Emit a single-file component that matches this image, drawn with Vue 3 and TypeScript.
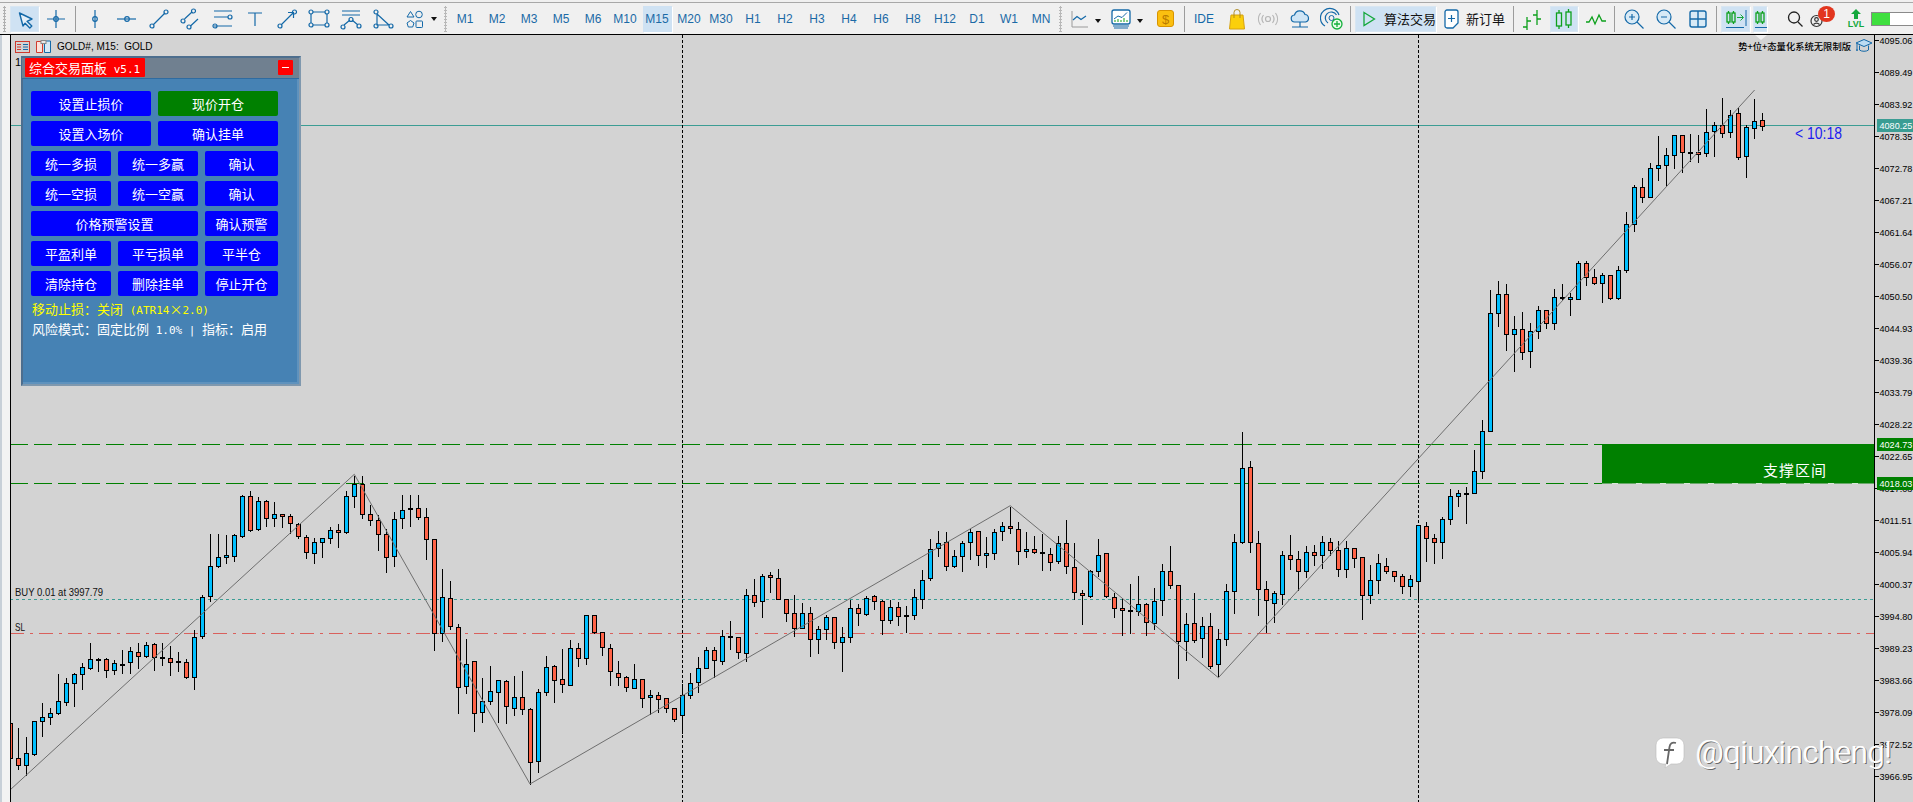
<script setup lang="ts">
type Raw = [number, number, number, number, number]

// Sampled from the reference: [high, bodyTop, bodyBottom, low, bullish]
const partA: Raw[] = [
  [862,955,976,988,0],[888,940,976,1005,1],[843,843,941,945,1],[786,832,844,888,1],[802,820,832,852,1],[700,784,820,822,1],[712,730,785,795,1],[697,703,730,797,1],[667,682,703,747,1],[606,658,683,687,1],
  [650,657,658,692,1],[650,658,691,711,0],[658,670,691,702,1],[628,671,673,700,1],[618,634,667,698,1],[606,637,647,684,0],[604,614,649,651,1],[606,613,652,690,0],[606,652,655,675,1],[614,655,667,704,0],
  [634,664,667,693,1],[655,667,712,714,0],[568,590,712,747,1],[463,470,589,595,1],[279,377,469,483,1],[279,350,377,381,1],[282,344,350,368,1],[279,286,347,362,1],[163,169,287,290,1],[150,169,269,272,0],
  [168,184,268,270,1],[178,184,235,257,0],[183,221,235,257,1],[218,221,229,260,0],[220,229,250,278,0],[246,251,289,295,0],[283,290,337,354,0],[292,305,340,368,1],[294,295,307,351,1],[257,271,295,308,1],
  [250,271,277,320,0],[150,169,277,278,1],[104,131,169,200,1],[105,131,223,234,0],[192,223,241,254,0],[222,241,283,330,0],[263,283,352,395,0],[214,236,349,378,1],[162,209,235,264,1],[162,205,208,258,1],
  [162,205,230,237,0],[201,230,298,357,0],[298,298,580,629,0],[385,470,580,603,1],[420,473,557,567,0],[549,562,742,819,0],[595,671,739,758,1],[660,664,818,873,0],[711,782,815,847,1],[675,754,782,792,1],
  [717,721,755,846,1],[717,724,799,849,0],[705,770,803,825,1],[690,770,808,822,0],[802,808,965,1032,0],[745,755,962,996,1],[645,680,755,765,1],[672,679,719,785,0],[625,718,731,755,0],[598,625,734,735,1],
  [605,625,653,678,0],[524,526,653,671,1],[522,526,575,578,0],[572,575,622,645,0],[610,623,694,735,0],[660,700,710,735,0],[705,710,740,752,0],[668,718,743,745,1],
  [718,718,775,800,0],[748,764,772,822,1],[754,766,776,815,0],[770,775,805,815,0],[800,805,836,842,0],[730,764,826,880,1],[697,728,766,775,1],[649,683,727,755,1],[617,629,683,683,1],[618,631,661,712,0],
  [568,587,664,673,1],[540,589,592,627,1],[588,592,637,654,0],[445,464,640,662,1],[415,464,487,497,0],[400,407,484,530,1],[393,406,412,456,0],[384,413,478,478,0],[476,476,520,543,0],[462,520,565,587,0],
  [486,520,565,565,1],[498,520,598,648,0],[556,568,596,639,1],[522,532,568,597,1],[532,532,607,623,0],[558,592,607,692,1],[477,505,592,605,1],[489,505,520,555,0],[465,473,523,525,1],[461,468,482,507,0],
  [478,484,541,582,0],[478,502,541,548,1],[483,502,529,554,0],[495,525,527,577,1],[445,470,526,536,1],[388,419,476,503,1],[295,326,415,420,1],[270,308,323,347,1],[273,307,379,389,0],[328,347,379,380,1],
  [300,308,347,392,1],[263,275,307,356,1],[271,274,344,374,0],[289,340,344,380,1],[265,275,340,356,1],[244,257,274,300,1],[197,257,265,279,0],[244,266,334,372,0],[273,326,334,350,1],[285,326,337,340,0],
  [278,337,339,390,1],[322,341,367,390,0],[285,308,364,368,1],[238,308,379,398,0],[306,380,457,477,0],[448,458,466,552,0],[388,393,469,470,1],[295,344,394,407,1],[335,340,469,472,0],[455,470,505,530,0],
  [470,503,511,585,0],[430,510,512,580,1],[405,493,514,525,1],[485,493,547,585,0],[442,482,548,566,1],[370,392,481,525,1],[316,394,434,443,0],[433,434,604,714,0],[515,553,604,660,1],[457,550,599,605,0],
  [528,557,595,652,1],[517,559,677,685,0],[565,596,673,707,1],[430,452,596,614,1],[280,305,452,518,1],[-27,85,307,308,1],[60,82,307,335,0],[270,310,446,524,0],[420,446,479,577,0],[450,460,490,545,1]
]
const partB: Raw[] = [
  [240,256,373,402,1],[192,256,268,297,0],[240,268,304,360,0],[225,247,304,320,1],[222,247,256,285,0],[195,217,256,293,1],[200,217,241,255,0],[210,241,298,318,0],[210,235,298,320,1],[232,235,264,290,0],
  [259,262,376,446,0],[282,331,376,398,1],[250,280,331,368,1],[262,289,304,308,0],[300,304,319,332,0],[310,319,349,368,0],[312,328,349,378,1],[163,166,334,395,1],[152,169,205,272,0],[190,205,217,278,0],
  [138,148,217,263,1],[55,79,148,162,1],[58,70,79,107,1],[48,68,70,158,1]
]
const partC: Raw[] = [
  [1047,1112,1178,1180,1],[958,992,1114,1133,1],[568,638,994,994,1],[541,583,638,678,1],[550,583,703,750,0],[645,688,703,812,1],[633,688,757,776,0],[667,694,754,800,1],[615,631,694,714,1],[631,631,670,684,0],
  [565,590,670,686,1],[549,590,594,600,1],[577,592,596,645,1],[481,490,598,598,1],[481,490,532,555,0],[504,532,550,552,0],[517,526,550,606,1],[526,526,595,596,0],[495,509,595,596,1],[333,373,509,515,1],
  [252,262,373,392,1],[232,262,290,306,0],[186,203,290,290,1],[105,196,203,240,1],[141,166,196,258,1],[102,106,166,204,1],[103,106,157,215,0],[99,156,158,183,1],[102,157,163,186,0],[24,95,160,167,1],
  [63,76,94,167,1],[-8,76,100,110,0],[28,44,97,112,1],[21,40,170,176,0],[73,82,169,231,1],[-6,64,83,114,1],[37,61,77,90,0]
]

const px = (v: number, y0: number) => Math.round(y0 + v / 3) + 0.5
const build = (rows: Raw[], y0: number) =>
  rows.map(([h, t, b, l, up]) => {
    const top = px(t, y0)
    return { hi: px(h, y0), lo: px(l, y0), top, height: Math.max(1, px(b, y0) - top), up: !!up }
  })
const candles = [
  { hi: 720, lo: 766, top: 723, height: 35, up: false },
  ...build(partA, 440),
  ...build(partB, 470),
  ...build(partC, 100)
].map((c, i) => ({ ...c, x: 10.5 + 8 * i }))

const axis = Array.from({ length: 24 }, (_, i) => ({
  y: 40 + 32 * i,
  label: (4095.06 - 5.57 * i).toFixed(2)
}))
const tags = [
  { y: 125, label: '4080.25', cls: 'tag-teal' },
  { y: 444, label: '4024.73', cls: 'tag-green' },
  { y: 483, label: '4018.03', cls: 'tag-green' }
]
const zigzag = '10,790 354.3,474.3 530,784 1010.2,505.7 1218.4,677.7 1754.6,90'
const periods = ['M1','M2','M3','M5','M6','M10','M15','M20','M30','H1','H2','H3','H4','H6','H8','H12','D1','W1','MN']
const buttons = [
  { t: '设置止损价', span: 's2' }, { t: '现价开仓', span: 's2', green: true },
  { t: '设置入场价', span: 's2' }, { t: '确认挂单', span: 's2' },
  { t: '统一多损', span: 's1' }, { t: '统一多赢', span: 's2' }, { t: '确认', span: 's1' },
  { t: '统一空损', span: 's1' }, { t: '统一空赢', span: 's2' }, { t: '确认', span: 's1' },
  { t: '价格预警设置', span: 's3' }, { t: '确认预警', span: 's1' },
  { t: '平盈利单', span: 's1' }, { t: '平亏损单', span: 's2' }, { t: '平半仓', span: 's1' },
  { t: '清除持仓', span: 's1' }, { t: '删除挂单', span: 's2' }, { t: '停止开仓', span: 's1' }
]
</script>

<template>
  <div class="app">
    <header class="toolbar">
      <span class="grip g10"></span>
      <span class="tool sel w29">
        <svg width="24" height="24" viewBox="0 0 24 24"><path d="M6.5 6 19 12l-5 2.3 4.800 4.700-2 2-4.700-4.800L10 19Z" fill="#e6f0f8" stroke="#1469a8" stroke-width="1.400" stroke-linejoin="round"/></svg>
      </span>
      <span class="tool w34">
        <svg class="ic" width="24" height="24" viewBox="0 0 24 24"><path d="M3 12h18M12 3v18"/><circle cx="12" cy="12" r="2.300"/></svg>
      </span>
      <span class="sep sep-a"></span>
      <span class="tool w32"><svg class="ic" width="24" height="24" viewBox="0 0 24 24"><path d="M12 3v18"/><circle cx="12" cy="12" r="2.300"/></svg></span>
      <span class="tool w32"><svg class="ic" width="24" height="24" viewBox="0 0 24 24"><path d="M2 12h19"/><circle cx="12" cy="12" r="2.300"/></svg></span>
      <span class="tool w32"><svg class="ic" width="24" height="24" viewBox="0 0 24 24"><path d="M6 18 18 6"/><circle cx="5" cy="19" r="2"/><circle cx="19" cy="5" r="2"/></svg></span>
      <span class="tool w32"><svg class="ic" width="24" height="24" viewBox="0 0 24 24"><path d="M5.500 12 13 5M11.500 19 19 12"/><circle cx="4" cy="14" r="2"/><circle cx="14.500" cy="4" r="2"/><circle cx="10" cy="20" r="2"/></svg></span>
      <span class="tool w32"><svg class="ic" width="24" height="24" viewBox="0 0 24 24"><path d="M3 4h18M3 10h14M3 19h18"/><circle cx="19" cy="10" r="2"/><circle cx="4" cy="19" r="2"/></svg></span>
      <span class="tool w32"><svg class="ic" width="24" height="24" viewBox="0 0 24 24"><path d="M5 6h14M12 6v13"/></svg></span>
      <span class="tool w32"><svg class="ic" width="24" height="24" viewBox="0 0 24 24"><path d="M6 18 18 6M13 5.500h5.500V11"/><circle cx="5" cy="19" r="2"/><circle cx="19.500" cy="5" r="2"/></svg></span>
      <span class="tool w32"><svg class="ic" width="24" height="24" viewBox="0 0 24 24"><path d="M6 5h12M6 18h12M4 7v9M20 7v9"/><circle cx="4" cy="5" r="2"/><circle cx="20" cy="5" r="2"/><circle cx="4" cy="18" r="2"/><circle cx="20" cy="18" r="2"/></svg></span>
      <span class="tool w32"><svg class="ic" width="24" height="24" viewBox="0 0 24 24"><path d="M3 4h18M3 8h18M5 18l6-5M13 13l6 5"/><circle cx="4" cy="20" r="2"/><circle cx="12" cy="12.500" r="2"/><circle cx="20" cy="19" r="2"/></svg></span>
      <span class="tool w32"><svg class="ic" width="24" height="24" viewBox="0 0 24 24"><path d="M6 7 18 18M6 7v11h12"/><circle cx="5" cy="5" r="2"/><circle cx="5" cy="19" r="2"/><circle cx="20" cy="19" r="2"/></svg></span>
      <span class="tool w32"><svg class="ic thin" width="24" height="24" viewBox="0 0 24 24"><path d="M7.500 4.500 11 10H4Z"/><circle cx="16" cy="7.500" r="3.300"/><path d="M7.500 13.500 11 16l-1.300 4H5.300L4 16Z"/><rect x="13" y="14" width="6.500" height="6.500" rx=".8"/></svg></span>
      <span class="drop w10"></span>
      <span class="grip g8"></span>
      <span v-for="p in periods" :key="p" class="period"><span class="pl" :class="{ on: p === 'M15' }">{{ p }}</span></span>
      <span class="grip g6"></span>
      <span class="tool w42 lc">
        <svg width="24" height="24" viewBox="0 0 24 24" fill="none"><path d="M5 4v16h16" stroke="#9a9a9a"/><path d="M6 13l4-3.500 4 3 5-3.500" stroke="#1469a8" stroke-width="1.200"/></svg>
        <i class="tri"></i>
      </span>
      <span class="tool w42 lc">
        <svg width="24" height="24" viewBox="0 0 24 24" fill="none"><rect x="3" y="3" width="18" height="14" rx="2" fill="#fff" stroke="#1469a8" stroke-width="1.300"/><path d="M5 12l4-3 4 1.500 5-5" stroke="#1469a8"/><path d="M6 15v-2M9 15v-3M12 15v-2M15 15v-4M18 15v-2" stroke="#12a012"/><path d="M4 19h16M5 21h14" stroke="#1469a8"/></svg>
        <i class="tri"></i>
      </span>
      <span class="tool w37">
        <svg width="24" height="24" viewBox="0 0 24 24"><rect x="3.500" y="3.500" width="16" height="16" rx="2.500" fill="#fbbf10" stroke="#d89400"/><text x="11.500" y="16.500" class="dollar">$</text></svg>
      </span>
      <span class="sep"></span>
      <span class="tool w38 ide">IDE</span>
      <span class="tool w28">
        <svg width="24" height="24" viewBox="0 0 24 24" fill="none"><path d="M6 8h12l1.500 14h-15Z" fill="#fbcf0c" stroke="#d6a210"/><path d="M9 11V5.500a3 3 0 0 1 6 0V11" stroke="#a88418" stroke-width=".9"/></svg>
      </span>
      <span class="tool w34">
        <svg width="24" height="24" viewBox="0 0 24 24" fill="none" stroke="#b5b5b5" stroke-width="1.200"><circle cx="12" cy="12" r="2.500"/><path d="M7.500 8a6.500 6.500 0 0 0 0 8M16.500 8a6.500 6.500 0 0 1 0 8M4.500 6a10 10 0 0 0 0 12M19.500 6a10 10 0 0 1 0 12"/></svg>
      </span>
      <span class="tool w30">
        <svg class="ic" width="24" height="24" viewBox="0 0 24 24"><path d="M7 15a3.500 3.500 0 0 1-.5-7A5.500 5.500 0 0 1 17 7.500 3.800 3.800 0 0 1 17.500 15Z" fill="#cfe5f5"/><path d="M12 15v5M4 20h16"/></svg>
      </span>
      <span class="tool w34">
        <svg width="24" height="24" viewBox="0 0 24 24" fill="none"><path d="M5 19a9.500 9.500 0 1 1 14-11" stroke="#1469a8" stroke-width="1.200"/><path d="M8 16a6 6 0 1 1 8.500-8" stroke="#1469a8" stroke-width="1.200"/><circle cx="11.500" cy="11" r="2.500" stroke="#1469a8"/><circle cx="17" cy="17" r="5" fill="#eafbea" stroke="#14b03c" stroke-width="1.300"/><path d="M17 14v6M14 17h6" stroke="#14b03c" stroke-width="1.300"/></svg>
      </span>
      <span class="sep sep-b"></span>
      <span class="tool sel w81 algo">
        <svg width="16" height="18" viewBox="0 0 16 18" fill="none"><path d="M3 2.500 13.500 9 3 15.500Z" stroke="#14a83c" stroke-width="1.300"/></svg>
        <span class="cn">算法交易</span>
      </span>
      <span class="tool w77 order">
        <svg width="18" height="22" viewBox="0 0 18 22" fill="none"><path d="M4 2h9a2 2 0 0 1 2 2v11l-5 5H4a2 2 0 0 1-2-2V4a2 2 0 0 1 2-2Z" fill="#fff" stroke="#1469a8" stroke-width="1.300"/><path d="M8.500 7v7M5 10.500h7" stroke="#1469a8" stroke-width="1.200"/></svg>
        <span class="cn">新订单</span>
      </span>
      <span class="sep"></span>
      <span class="tool w36">
        <svg class="gr" width="24" height="24" viewBox="0 0 24 24"><path d="M7 10v13M3 20h4M7 14h4M17 3v15M13 8h4M17 12h4"/></svg>
      </span>
      <span class="tool sel w28">
        <svg class="gr" width="24" height="24" viewBox="0 0 24 24"><path d="M7 3v3M7 19v3M16.500 2v3M16.500 18v3"/><rect x="4.500" y="6" width="5" height="13" fill="#d2e4f4"/><rect x="14" y="5" width="5" height="13" fill="#d2e4f4"/></svg>
      </span>
      <span class="tool w36">
        <svg class="gr" width="24" height="24" viewBox="0 0 24 24"><path d="M2 15h3l3-5 3 7 4-9 3 6h4"/></svg>
      </span>
      <span class="sep"></span>
      <span class="tool w35 nudge">
        <svg class="ic" width="24" height="24" viewBox="0 0 24 24"><circle cx="10" cy="10" r="7" fill="#d8eaf6"/><path d="m15 15 6.500 6.500M7 10h6M10 7v6"/></svg>
      </span>
      <span class="tool w32">
        <svg class="ic" width="24" height="24" viewBox="0 0 24 24"><circle cx="10" cy="10" r="7" fill="#d8eaf6"/><path d="m15 15 6.500 6.500M7 10h6"/></svg>
      </span>
      <span class="tool w32">
        <svg class="ic" width="24" height="24" viewBox="0 0 24 24"><rect x="4" y="4" width="16" height="16" rx="2" fill="#d8eaf6" stroke-width="1.400"/><path d="M12 4v16M4 12h16" stroke-width="1.400"/></svg>
      </span>
      <span class="sep sep-c"></span>
      <span class="tool sel w29">
        <svg width="24" height="24" viewBox="0 0 24 24" fill="none"><g class="gr"><path d="M4.500 4v2M4.500 15v2M9.500 4v2M9.500 15v2"/><rect x="3" y="6" width="3" height="9"/><rect x="8" y="6" width="3" height="9"/></g><path d="M13 10.500h6M16.500 7.500l3 3-3 3" stroke="#14a83c"/><path d="M22 3v16M2 20.500h18" stroke="#1469a8"/></svg>
      </span>
      <span class="tool sel w14 clip">
        <svg width="14" height="24" viewBox="0 0 14 24" fill="none"><g class="gr"><path d="M4.500 4v2M4.500 15v2M9.500 4v2M9.500 15v2"/><rect x="3" y="6" width="3" height="9"/><rect x="8" y="6" width="3" height="9"/></g><path d="M2 20.500h12" stroke="#1469a8"/></svg>
      </span>
      <span class="tool w28 search">
        <svg width="24" height="24" viewBox="0 0 24 24" fill="none" stroke="#222" stroke-width="1.300"><circle cx="11" cy="10.500" r="5.500"/><path d="m15 15 4.500 4.500"/></svg>
      </span>
      <span class="tool w28 mail">
        <svg width="24" height="24" viewBox="0 0 24 24" fill="none" stroke="#333" stroke-width="1.200"><circle cx="7.500" cy="14" r="5.500"/><path d="M4.500 17.500a4 4 0 0 1 6 0"/><circle cx="7.500" cy="12.500" r="1.800"/></svg>
        <span class="badge">1</span>
      </span>
      <span class="tool w28 lvl">
        <svg width="14" height="10" viewBox="0 0 14 10" fill="#14a83c"><path d="M7 0 12 5H9v5H5V5H2Z"/></svg>
        <span>LVL</span>
      </span>
      <span class="progress"><i></i></span>
    </header>

    <main class="work">
      <aside class="strip"></aside>
      <section class="chart">
        <svg class="canvas" width="1903" height="767" viewBox="10 35 1903 767">
          <rect x="1602" y="444" width="272" height="39.500" fill="#008000"/>
          <path d="M1612 483.500h1652" class="zone-dash"/>
          <path d="M10 444.500H1874" class="dash-g"/>
          <path d="M10 483.500H1602" class="dash-g"/>
          <path d="M10 125.500H1874" class="line-teal"/>
          <path d="M10 599.500H1874" class="line-buy"/>
          <path d="M10 633.500H1874" class="line-sl"/>
          <path d="M682.500 35V802M1418.500 35V802" class="cross"/>
          <g v-for="c in candles" :key="c.x">
            <path :d="`M${c.x} ${c.hi}V${c.lo}`" class="wick"/>
            <rect :x="c.x - 2" :y="c.top" width="4" :height="c.height" :class="c.up ? 'bull' : 'bear'"/>
          </g>
          <polyline :points="zigzag" class="zig"/>
          <text x="1763" y="476" class="zone-text">支撑区间</text>
          <text x="15" y="596" class="lbl" textLength="88" lengthAdjust="spacingAndGlyphs">BUY 0.01 at 3997.79</text>
          <text x="15" y="631" class="lbl" textLength="10" lengthAdjust="spacingAndGlyphs">SL</text>
          <text x="1795" y="139" class="count" textLength="47" lengthAdjust="spacingAndGlyphs">&lt; 10:18</text>
          <path d="M1755 35h12l-6 5Z" fill="#f0f0f0"/>
          <path d="M10.500 35V802" class="ax"/>
          <path d="M1874.500 35V802" class="ax"/>
          <g v-for="a in axis" :key="a.label">
            <path :d="`M1875 ${a.y + 0.5}h4`" class="ax"/>
            <text x="1879.500" :y="a.y + 4" class="tick">{{ a.label }}</text>
          </g>
          <g v-for="t in tags" :key="t.label">
            <rect x="1877" :y="t.y - 6" width="36" height="13" :class="t.cls"/>
            <text x="1879.500" :y="t.y + 4" class="tag-text">{{ t.label }}</text>
          </g>
        </svg>

        <div class="chart-head">
          <svg width="15" height="12" viewBox="0 0 15 12" fill="none"><rect x=".5" y=".5" width="14" height="11" stroke="#d03a2e"/><path d="M2 3.500h4M2 6h4M2 8.500h4" stroke="#d03a2e"/><path d="M8 3.500h5M8 6h5M8 8.500h5" stroke="#1469a8"/></svg>
          <svg class="disk" width="15" height="13" viewBox="0 0 15 13" fill="none"><path d="M.5 1.500h6v11h-6Z" fill="#fbe3dc" stroke="#d03a2e"/><path d="M8.500 1h6v11.500h-6Z" fill="#d8eaf6" stroke="#1469a8"/><rect x="5" y=".5" width="5" height="3" fill="#e8e8e8" stroke="#888"/></svg>
          <span>GOLD#, M15:&nbsp; GOLD</span>
        </div>
        <span class="stray">10</span>
        <div class="promo">
          <span>势+位+态量化系统无限制版</span>
          <svg width="18" height="16" viewBox="0 0 18 16" fill="none"><path d="M1 5l8-3.500L17 5 9 8.500Z" fill="#bcdcf2" stroke="#1469a8"/><path d="M4.500 7.500V12c2 1.700 7 1.700 9 0V7.500M2 5.500V11" stroke="#1469a8"/><circle cx="2" cy="12" r="1" fill="#1469a8"/></svg>
        </div>

        <div class="panel">
          <div class="title">
            <span class="title-label">综合交易面板<span class="lat"> v5.1</span></span>
            <span class="min"><i></i></span>
          </div>
          <div class="panel-body">
            <div class="grid">
              <button v-for="(b, i) in buttons" :key="i" type="button" class="btn" :class="[b.span, { green: b.green }]">{{ b.t }}</button>
            </div>
            <p class="status yellow">移动止损：关闭<span class="lat"> (ATR14</span>×<span class="lat">2.0)</span></p>
            <p class="status white">风险模式：固定比例<span class="lat"> 1.0% | </span>指标：启用</p>
          </div>
        </div>

        <div class="mark">
          <svg width="30" height="32" viewBox="0 0 30 32">
            <path d="M8 1h14a7 7 0 0 1 7 7v12a7 7 0 0 1-7 7h-6l-6 4 1-4H8a7 7 0 0 1-7-7V8a7 7 0 0 1 7-7Z" fill="#fff" stroke="#bbb" stroke-width=".6"/>
            <path d="M21 6c-4-1-6 .5-6.500 4l-2.500 17M9 13h10" fill="none" stroke="#666" stroke-width="1.800"/>
          </svg>
          <span>@qiuxincheng!</span>
        </div>
      </section>
    </main>
  </div>
</template>

<style>
html, body { margin: 0; background: #f0f0f0; overflow: hidden; }
</style>

<style scoped>
.app {
  width: 1913px;
  height: 802px;
  display: flex;
  flex-direction: column;
  overflow: hidden;
  background: #f0f0f0;
  font-family: "Liberation Sans", "Noto Sans CJK SC", sans-serif;
}
.toolbar {
  box-sizing: border-box;
  border-top: 1px solid #a8a8a8;
  border-bottom: 1px solid #000;
  margin-top: 2px;
  height: 33px;
  display: flex;
  align-items: center;
  flex: none;
  overflow: hidden;
}
.grip { flex: none; height: 26px; box-sizing: border-box; }
.g10 { width: 10px; padding-left: 3px; background: radial-gradient(circle, #b0b0b0 1px, transparent 1.2px) 3px 0 / 3px 3px repeat-y; }
.g8 { width: 8px; background: radial-gradient(circle, #b8b8b8 1px, transparent 1.2px) 3px 0 / 3px 3px repeat-y; }
.g6 { width: 6px; background: radial-gradient(circle, #b8b8b8 1px, transparent 1.2px) 2px 0 / 3px 3px repeat-y; }
.tool {
  flex: none;
  height: 26px;
  display: flex;
  align-items: center;
  justify-content: center;
  position: relative;
  box-sizing: border-box;
}
.sel { background: #cfe2f3; box-shadow: inset 0 0 0 1px #d8e6f2, 1px 1px 0 #fff; }
.w10 { width: 10px; } .w14 { width: 14px; } .w28 { width: 28px; } .w29 { width: 29px; } .w30 { width: 30px; }
.w32 { width: 32px; } .w34 { width: 34px; } .w35 { width: 35px; } .w36 { width: 36px; } .w37 { width: 37px; }
.w38 { width: 38px; } .w42 { width: 42px; } .w77 { width: 77px; } .w81 { width: 81px; }
.ic { fill: none; stroke: #1469a8; stroke-width: 1.200; }
.ic.thin { stroke-width: 1; }
.gr { fill: none; stroke: #0da01c; stroke-width: 1.300; }
.sep { flex: none; width: 1px; height: 26px; background: #9c9c9c; }
.sep-a { margin: 0 3px 0 2px; }
.sep-b { margin: 0 4px 0 1px; }
.sep-c { margin: 0 4px 0 2px; }
.drop { flex: none; position: relative; height: 10px; }
.drop::after, .tri {
  content: "";
  position: absolute;
  width: 0;
  height: 0;
  border-left: 3.500px solid transparent;
  border-right: 3.500px solid transparent;
  border-top: 4px solid #111;
}
.drop::after { left: 0; top: 3px; }
.tri { position: static; margin-left: 4px; margin-top: 5px; }
.lc { justify-content: flex-start; padding-left: 4px; }
.period { flex: none; width: 32px; height: 26px; display: flex; justify-content: center; }
.pl {
  width: 29px;
  line-height: 26px;
  text-align: center;
  font-size: 12px;
  color: #1b6aa6;
}
.pl.on { background: #cfe2f3; box-shadow: 1px 1px 0 #fff; }
.dollar { font: 13px "Liberation Sans", sans-serif; fill: #b87a00; text-anchor: middle; }
.ide { font-size: 12px; color: #1469a8; }
.cn { font: 13px "Noto Sans CJK SC", sans-serif; color: #111; white-space: nowrap; }
.algo { gap: 7px; justify-content: flex-start; padding-left: 6px; }
.order { gap: 5px; justify-content: flex-start; padding-left: 7px; }
.nudge svg { margin-left: 2px; }
.clip { overflow: hidden; margin-left: 3px; }
.search { margin-left: 14px; }
.mail { justify-content: flex-start; padding-left: 0; }
.badge {
  position: absolute;
  left: 9px;
  top: 0;
  width: 17px;
  height: 16px;
  border-radius: 50%;
  background: #e2361f;
  color: #fff;
  font-size: 12px;
  line-height: 16px;
  text-align: center;
}
.lvl {
  flex-direction: column;
  margin-left: 5px;
  color: #14a83c;
  font-size: 9px;
  font-weight: 700;
  line-height: 10px;
}
.progress {
  flex: none;
  margin-left: 1px;
  width: 42px;
  height: 14px;
  box-sizing: border-box;
  background: #fff;
  border: 1px solid #8a8a8a;
  border-right: none;
}
.progress i { display: block; width: 18px; height: 100%; background: #3fdf3f; }
.work { flex: 1; display: flex; min-height: 0; }
.strip { flex: none; width: 10px; background: linear-gradient(90deg, #c8d0d8 0 2px, #f3f3f3 2px); }
.chart {
  flex: 1;
  position: relative;
  background: #d3d3d3;
  overflow: hidden;
}
.canvas { display: block; }
.canvas text { font-family: "Liberation Sans", sans-serif; }
.cross { stroke: #000; stroke-width: 1; stroke-dasharray: 3 2; shape-rendering: crispEdges; }
.wick { stroke: #000; stroke-width: 1; fill: none; shape-rendering: crispEdges; }
.bull, .bear { stroke: #000; stroke-width: 1; shape-rendering: crispEdges; }
.bull { fill: #00bfff; }
.bear { fill: #ff6347; }
.zig { fill: none; stroke: #6e6e6e; stroke-width: 1; }
.dash-g { stroke: #008000; stroke-width: 1; stroke-dasharray: 18 6; shape-rendering: crispEdges; }
.zone-dash { stroke: #d8e8d8; stroke-width: 1; stroke-dasharray: 6 18; shape-rendering: crispEdges; }
.line-teal { stroke: #3b9d94; stroke-width: 1; shape-rendering: crispEdges; }
.line-buy { stroke: #3b9d94; stroke-width: 1; stroke-dasharray: 3 3; shape-rendering: crispEdges; }
.line-sl { stroke: #d9605c; stroke-width: 1; stroke-dasharray: 14 6 3 6; shape-rendering: crispEdges; }
.ax { stroke: #000; stroke-width: 1; fill: none; shape-rendering: crispEdges; }
.tick { font-size: 9.100px; fill: #000; }
.lbl { font-size: 11px; fill: #111; }
.count { font-size: 16px; fill: #1c1cf0; }
.canvas .zone-text { font: 15px "Noto Sans CJK SC", sans-serif; fill: #fff; letter-spacing: 1px; }
.tag-teal { fill: #3b9d94; }
.tag-green { fill: #008000; }
.tag-text { font-size: 9.100px; fill: #fff; }
.chart-head {
  position: absolute;
  left: 5px;
  top: 5px;
  display: flex;
  align-items: center;
  gap: 6px;
  font-size: 10px;
  color: #000;
  white-space: nowrap;
}
.disk { margin-right: 0; }
.stray { position: absolute; left: 5px; top: 21px; font-size: 11px; color: #000; }
.promo {
  position: absolute;
  right: 40px;
  top: 3px;
  display: flex;
  align-items: center;
  gap: 4px;
  font: 500 9.300px "Noto Sans CJK SC", sans-serif;
  color: #000;
  white-space: nowrap;
}
.panel {
  position: absolute;
  left: 11px;
  top: 21px;
  width: 280px;
  height: 330px;
  box-sizing: border-box;
  display: flex;
  flex-direction: column;
  border: 2px solid #7f98ae;
  border-top-color: #4d6e8e;
  border-left-color: #4d6e8e;
  background: #4682b4;
  font-family: "Noto Sans CJK SC", sans-serif;
  color: #fff;
}
.title {
  flex: none;
  height: 20px;
  margin-left: -1px;
  background: #708090;
  border-bottom: 1px solid #2f6ba0;
  display: flex;
  align-items: flex-start;
  justify-content: space-between;
  padding: 0 6px 0 3px;
}
.title-label {
  width: 120px;
  height: 19px;
  background: #ff0000;
  font-size: 13px;
  line-height: 19px;
  padding-left: 4px;
  box-sizing: border-box;
  border-radius: 1px;
  white-space: pre;
}
.min {
  width: 15px;
  height: 15px;
  margin-top: 2px;
  background: #ff0000;
  border-radius: 1px;
  display: flex;
  align-items: center;
  justify-content: center;
}
.min i { display: block; width: 7px; height: 1px; background: #fff; }
.panel-body {
  flex: 1;
  padding: 12px 0 0 8px;
  box-sizing: border-box;
  border-right: 2px solid #5f92bd;
  border-bottom: 2px solid #5f92bd;
}
.grid {
  display: grid;
  grid-template-columns: 80px 33px 40px 73px;
  column-gap: 7px;
  row-gap: 5px;
  grid-auto-rows: 25px;
}
.s1 { grid-column: span 1; }
.s2 { grid-column: span 2; }
.s3 { grid-column: span 3; }
.btn {
  border: none;
  padding: 0;
  margin: 0;
  background: #0000ff;
  color: #fff;
  font: 13px "Noto Sans CJK SC", sans-serif;
  border-radius: 2px;
}
.btn.green { background: #008000; }
.lat { font-family: "DejaVu Sans Mono", monospace; font-size: 11px; line-height: 0; white-space: pre; }
.status {
  margin: 0;
  height: 20px;
  font-size: 13px;
  line-height: 20px;
  padding-left: 1px;
  white-space: nowrap;
}
.yellow { color: #ffff00; margin-top: 3px; }
.white { color: #fff; }
.mark {
  position: absolute;
  left: 1645px;
  top: 700px;
  display: flex;
  align-items: center;
  gap: 11px;
  font: 300 30.500px Roboto, sans-serif;
  color: #fff;
  text-shadow: 1px 1px 0 rgba(0,0,0,.5), -1px 0 0 rgba(255,255,255,.9);
  white-space: nowrap;
}
</style>
